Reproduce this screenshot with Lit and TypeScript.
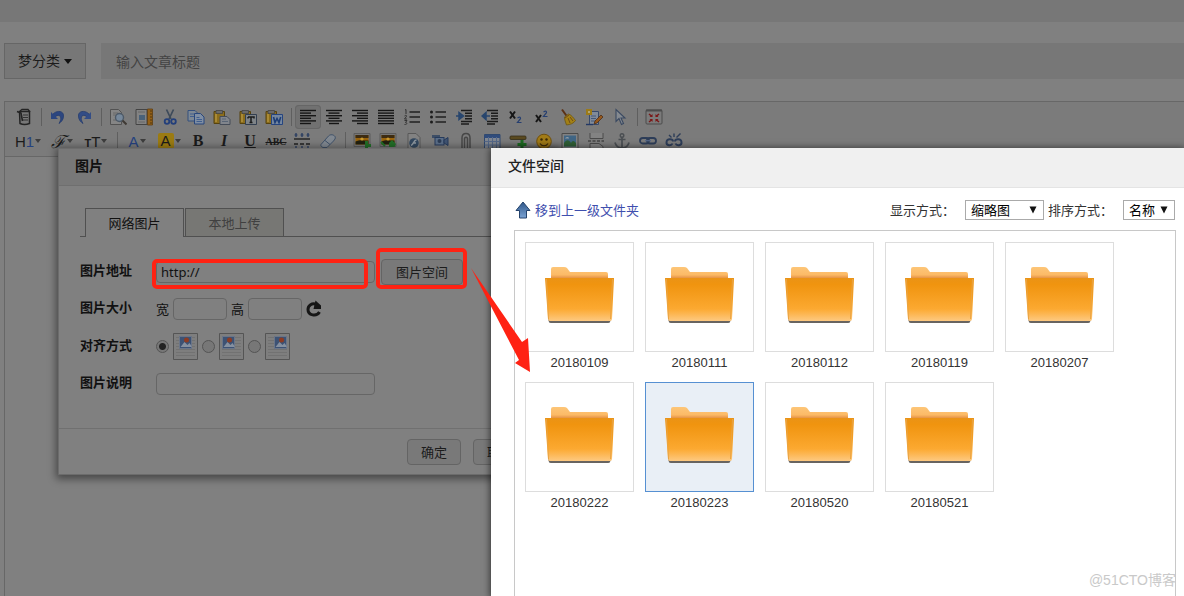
import { LitElement, html, svg, css } from "lit";
import { customElement, property } from "lit/decorators.js";
import { classMap } from "lit/directives/class-map.js";

const lines = (rows: number[][]) =>
  rows.map((r, i) => svg`<path d="M${r[0]} ${2.5 + i * 2.6}H${r[1]}" stroke="#161616" stroke-width="1.4"/>`);

const clipboard = svg`<path d="M1 3.5h10.500v12H1z" fill="#8b6d1c" stroke="#57430f"/><path d="M3 2.500h6.500v3H3z" fill="#6a6a6a" stroke="#444" stroke-width=".8"/><path d="M2 6h2v8H2z" fill="#a98a36"/>`;
const chain = svg`<rect x="1" y="6" width="9" height="5.500" rx="2.750" fill="none" stroke="#2d3d58" stroke-width="1.800"/><rect x="8" y="6" width="9" height="5.500" rx="2.750" fill="none" stroke="#2d3d58" stroke-width="1.800"/><path d="M6 8.700h6" stroke="#56688a" stroke-width="1.200"/>`;
const photo = svg`<path d="M1 1.500h16v13H1z" fill="#777" stroke="#5c5c5c"/><path d="M2.500 3h13v9.500h-13z" fill="#9a640c"/><path d="M2.500 3h13v3h-13z" fill="#3d2c12"/><path d="M2.500 9.500c4-2 8-1 13-1v4h-13z" fill="#22200f"/><circle cx="9" cy="7" r="1.600" fill="#c89a30"/>`;

const ICONS: Record<string, unknown> = {
  source: svg`<path d="M4.500 3.500h10v12c-3 1.200-7 1.200-9.500 0z" fill="#777" stroke="#242424" stroke-width="1.500"/><path d="M5 3l2-1.500h6L15 4" fill="none" stroke="#242424" stroke-width="1.300"/><path d="M2 3.500l4 1.500 1.500 8" fill="none" stroke="#242424" stroke-width="1.600"/><path d="M8 7h5M8 9.500h5M8 12h5" stroke="#333"/>`,
  undo: svg`<path d="M3 7.500C6 2 15 2 14.500 8c0 4-2.500 6-4.500 7.500 1.500-3 2.500-5 1.300-7C10 6.500 7.500 7.500 6 9" fill="#2c4680" stroke="#263c6d" stroke-width=".8"/><path d="M2 4v7h7z" fill="#2c4680"/>`,
  redo: svg`<path d="M15 7.500C12 2 3 2 3.500 8c0 4 2.500 6 4.500 7.500-1.500-3-2.500-5-1.300-7C8 6.500 10.500 7.500 12 9" fill="#334d86" stroke="#263c6d" stroke-width=".8"/><path d="M16 4v7H9z" fill="#334d86"/>`,
  preview: svg`<path d="M1.500 1.500h8l3 3v12h-11z" fill="#858585" stroke="#525252"/><path d="M4 5h5M4 7h3M4 12h4" stroke="#686868"/><circle cx="10.500" cy="9.500" r="4" fill="#76889b" stroke="#4d5966" stroke-width="1.400"/><path d="M13.500 12.500l4 4" stroke="#3f3a35" stroke-width="2"/>`,
  template: svg`<path d="M1 1.500h11v15H1z" fill="#838383" stroke="#444"/><path d="M4 7h6v5H4z" fill="#496179"/><path d="M3 4h7M3 14h7" stroke="#666"/><path d="M12.500 1h5v16h-5z" fill="#946016" stroke="#5e3e12" stroke-width=".8"/><path d="M15 3h2M15 6h2M15 9h2M15 12h2M15 15h2" stroke="#50360e"/>`,
  cut: svg`<path d="M5.500 1.500L10 11M12.500 1.500L8 11" stroke="#3d4a5a" stroke-width="1.700"/><circle cx="6" cy="13.500" r="2.300" fill="none" stroke="#233f7b" stroke-width="1.800"/><circle cx="12.500" cy="13.500" r="2.300" fill="none" stroke="#233f7b" stroke-width="1.800"/>`,
  copy: svg`<path d="M1 2.500h7l2.500 2.500v8H1z" fill="#7d8894" stroke="#35507e"/><path d="M7.500 5.500h6L17 9v7H7.500z" fill="#7f8ea3" stroke="#29477c"/><path d="M3 6h4M3 8.500h4M9.500 9.500h3M9.500 11.500h5.500M9.500 13.500h5.500" stroke="#405e8f"/>`,
  paste: svg`${clipboard}<path d="M7 8.500h7l3 3v5H7z" fill="#81858c" stroke="#454c58"/><path d="M9 11h4M9 13.500h6" stroke="#596575"/>`,
  pastetext: svg`${clipboard}<path d="M6.500 6.500h11v10h-11z" fill="#7f8488" stroke="#333f50"/><path d="M9 9h6v1.500M9 9v1.500M12 9v5.500M10.500 14.500h3" fill="none" stroke="#1b1b1b" stroke-width="1.500"/>`,
  pasteword: svg`${clipboard}<path d="M6.500 6.500h11v10h-11z" fill="#75879f" stroke="#264580"/><path d="M8.500 9l1.500 5.500 2-4 2 4L15.700 9" fill="none" stroke="#1d3d77" stroke-width="1.600"/>`,
  left: svg`${lines([[1, 17], [1, 12], [1, 17], [1, 12], [1, 17], [1, 12]])}`,
  center: svg`${lines([[1, 17], [3.500, 14.500], [1, 17], [3.500, 14.500], [1, 17], [4, 14]])}`,
  right: svg`${lines([[1, 17], [6, 17], [1, 17], [6, 17], [1, 17], [6, 17]])}`,
  full: svg`${lines([[1, 17], [1, 17], [1, 17], [1, 17], [1, 17], [1, 17]])}`,
  ol: svg`<path d="M6.500 4H17M6.500 9H17M6.500 14H17" stroke="#222" stroke-width="1.400"/><path d="M2 2l1-.5V6M1.500 8c2-1.500 2.500 0 1.500 1l-1.500 2h2.500M1.500 12.500H4l-1.500 2c2 0 2 2-1 2" fill="none" stroke="#333"/>`,
  ul: svg`<path d="M6.500 4H17M6.500 9H17M6.500 14H17" stroke="#222" stroke-width="1.400"/><circle cx="2.500" cy="4" r="1.500" fill="#1c1c1c"/><circle cx="2.500" cy="9" r="1.500" fill="#1c1c1c"/><circle cx="2.500" cy="14" r="1.500" fill="#1c1c1c"/>`,
  indent: svg`<path d="M6 2.500h11M10 5.200h7M10 8h7M10 10.800h7M6 13.500h11M6 16h8" stroke="#1c1c1c" stroke-width="1.400"/><path d="M1 8h4M4 4.500L8.500 8 4 11.500z" fill="#28466e" stroke="#28466e" stroke-width="1.500"/>`,
  outdent: svg`<path d="M6 2.500h11M10 5.200h7M10 8h7M10 10.800h7M6 13.500h11M6 16h8" stroke="#1c1c1c" stroke-width="1.400"/><path d="M5 8h4M5 4.500L1 8l4 3.500z" fill="#28466e" stroke="#28466e" stroke-width="1.500"/>`,
  sub: svg`<path d="M3 3.500l5 7M8 3.500l-5 7" stroke="#161616" stroke-width="2"/><path d="M10.500 10c3-2 4 0 2 2l-2 2.500h4" fill="none" stroke="#263f70" stroke-width="1.200"/>`,
  sup: svg`<path d="M3 7l5 7M8 7l-5 7" stroke="#161616" stroke-width="2"/><path d="M10.500 4c3-2 4 0 2 2l-2 2.500h4" fill="none" stroke="#263f70" stroke-width="1.200"/>`,
  broom: svg`<path d="M3 1.500l5 7" stroke="#5b3115" stroke-width="2"/><path d="M5.500 9l4-3c3 1 5 4 7 6.500-2 3-5 4-9 4.500-1-3-2-5-2-8z" fill="#a28016" stroke="#6c5613" stroke-width=".8"/><path d="M6 10l4-3M9 10l2 5M11 9l3 4" stroke="#6f4a18"/>`,
  format: svg`<path d="M4.500 3.500h9v13h-9z" fill="#818b99" stroke="#384a6b"/><path d="M6 8h5M6 10.500h5M6 13h5" stroke="#44597b"/><path d="M1 1h6v6H1z" fill="#9c7b18"/><path d="M3 3h2v2H3z" fill="#b1a574"/><path d="M9 16l1-3 6-6 2 2-6 6z" fill="#94571c" stroke="#4b2f1b" stroke-width=".8"/><path d="M1 16.500h7" stroke="#233865" stroke-width="1.400"/>`,
  select: svg`<path d="M5 1.500v12l3-3 2.500 6 2-1-2.500-5.500h4z" fill="#858a90" stroke="#3a4961" stroke-width="1.100"/>`,
  fullscreen: svg`<rect x="1" y="2" width="16" height="14" rx="1" fill="#7b7b7b" stroke="#4c4c4c"/><path d="M1 2.500h16" stroke="#4c4c4c" stroke-width="2"/><path d="M4 6l3 2.500M14 6l-3 2.500M4 14l3-2.500M14 14l-3-2.500" stroke="#7b1717" stroke-width="1.500"/><path d="M7.500 6v3h-3zM10.500 6v3h3zM7.500 14v-3h-3zM10.500 14v-3h3z" fill="#7b1717"/>`,
  lineheight: svg`<path d="M1 7h16" stroke="#222" stroke-width="1.400"/><path d="M1 12h4M7 12h4M13 12h4" stroke="#222" stroke-width="1.400"/><path d="M3 1v4M9 1v4M15 1v4M3 14v3M9 14v3M15 14v3" stroke="#263a60" stroke-width="1.300"/><path d="M1.500 3h3M7.500 3h3M13.500 3h3" stroke="#263a60"/>`,
  eraser: svg`<path d="M2 12.500L9.500 4c2-2 5-1.500 6.500.500 1 2-.5 3-1.500 4.500L8 15.500H4c-1.500-.5-2.500-1.500-2-3z" fill="#818890" stroke="#3f5169"/><path d="M6 8.500l5 4" stroke="#3f5169"/>`,
  image: svg`${photo}<path d="M12 9h3v3h3v3h-3v3h-3z" fill="#226e27"/>`,
  multiimage: svg`${photo}<path d="M10 11l3-3 4 4-1.500 3H10z" fill="#226e27"/><path d="M2 10l4 4" stroke="#226e27" stroke-width="2"/>`,
  flash: svg`<path d="M3 1.500h8l4 4v12H3z" fill="#828282" stroke="#595959"/><circle cx="9" cy="11" r="4.800" fill="#33485f"/><path d="M11.500 8c-3 0-3 5-5.500 5.500M8 11h3" fill="none" stroke="#8d969e" stroke-width="1.500"/>`,
  media: svg`<path d="M1 3h8v3H1z" fill="#3d4e66"/><rect x="4" y="5.500" width="9" height="7.500" fill="#5b6e88" stroke="#263b5c"/><path d="M13 8l4-2.500v8L13 11z" fill="#405472" stroke="#263b5c"/><circle cx="8.500" cy="9" r="2" fill="#2d3d55"/>`,
  file: svg`<path d="M5 17V6c0-6 8-6 8 0v11M7.500 17V7c0-2.500 3-2.500 3 0v10" fill="none" stroke="#474747" stroke-width="1.500"/>`,
  table: svg`<path d="M1.500 2.500h15.500v14H1.500z" fill="#838992" stroke="#30496f"/><path d="M1.500 3h15.500v3H1.500z" fill="#304c7c"/><path d="M1.500 9.500H17M1.500 13H17M5.500 5v12M9.500 5v12M13.500 5v12" stroke="#55698b"/>`,
  hr: svg`<rect x="1" y="4" width="16" height="3.500" rx="1" fill="#5a4a20" stroke="#352e1b" stroke-width=".8"/><path d="M11.500 8h3v3h3v3h-3v3h-3v-3h-3v-3h3z" fill="#1e6d23"/>`,
  emoji: svg`<circle cx="9" cy="9.500" r="7.300" fill="#a17b17" stroke="#70500e"/><circle cx="6.500" cy="7.500" r="1.200" fill="#3b2a0a"/><circle cx="11.500" cy="7.500" r="1.200" fill="#3b2a0a"/><path d="M5 11.500c2 3 6 3 8 0" fill="none" stroke="#3b2a0a" stroke-width="1.200"/>`,
  map: svg`<path d="M1 1.500h16v15H1z" fill="#818181" stroke="#4b4b4b"/><path d="M3 3.500h12v11H3z" fill="#3f6584"/><path d="M3 11c3-4 5-3 7 0 2-3 3-2 5 0v3.500H3z" fill="#2e5d35"/><path d="M4 6.500c1-2 4-2 4 0z" fill="#8e9aa4"/>`,
  pagebreak: svg`<path d="M3 1v5.500h13V1" fill="#838383" stroke="#4a4a4a"/><path d="M1 9h16" stroke="#444" stroke-dasharray="3 1.500" stroke-width="1.400"/><path d="M3 17v-5.500h9l4 3V17" fill="#838383" stroke="#4a4a4a"/>`,
  anchor: svg`<circle cx="9" cy="3.500" r="1.800" fill="none" stroke="#4a4e52" stroke-width="1.400"/><path d="M9 5v11M5.500 7.500h7M2 10.500c1 4 4 5.500 7 5.500s6-1.500 7-5.500" fill="none" stroke="#4a4e52" stroke-width="1.700"/>`,
  link: chain,
  unlink: svg`<path d="M8 9.500C8 7 2 6 1.500 10s5 4 6 1.500M10 9.500c0-2.500 6-3.500 6.500.5s-5 4-6 1.500" fill="none" stroke="#2d3d58" stroke-width="1.900"/><path d="M9 5V1.500M11.500 5.500l4-4M6.500 5.500L4 3" stroke="#2d3d58" stroke-width="1.400"/>`,
};

const ROW_ONE = "source | undo redo | preview template cut copy paste pastetext pasteword | left center right full ol ul indent outdent sub sup broom format select | fullscreen".split(" ");
const ROW_TWO = "image multiimage flash media file table hr emoji map pagebreak anchor link unlink".split(" ");

@customElement("editor-toolbar")
export class EditorToolbar extends LitElement {
  static styles = css`
    :host { display: block; padding: 3px 6px; background: #7b7b7b; border-bottom: 1px solid #676767; overflow: hidden; }
    .row { display: flex; height: 24px; align-items: center; }
    button { flex: none; width: 26px; height: 24px; padding: 0; border: 0; background: none; display: flex; align-items: center; justify-content: center; color: #1b1b1b; font: 15px "Liberation Sans", Arial, sans-serif; }
    svg { display: block; width: 18px; height: 18px; }
    .active { background: #717171; box-shadow: inset 0 0 0 1px #666; border-radius: 4px; }
    .sep { flex: none; width: 8px; height: 18px; background: linear-gradient(#5f5f5f, #5f5f5f) center / 1px 100% no-repeat; }
    .wide { width: 34px; }
    .mid { width: 32px; }
    .caret { margin-left: 1px; border: 3px solid transparent; border-top: 4px solid #3d3d3d; border-bottom: 0; }
    .blue { color: #25427f; }
    .script { font: italic 18px "DejaVu Serif", serif; }
    .small { font-size: 11px; padding-top: 3px; font-weight: bold; }
    .mark { background: #9b7b12; border-radius: 2px; width: 16px; height: 16px; line-height: 16px; }
    .serif { font: bold 16px "Liberation Serif", serif; }
    .italic { font-style: italic; }
    .under { text-decoration: underline; }
    .strike { font: bold 10px "Liberation Serif", serif; text-decoration: line-through; }
  `;
  private icon(name: string) {
    if (name === "|") return html`<span class="sep"></span>`;
    return html`<button type="button" aria-label=${name} class=${classMap({ active: name === "left" })}>
      <svg viewBox="0 0 18 18" fill="none">${ICONS[name]}</svg>
    </button>`;
  }
  render() {
    const caret = html`<i class="caret"></i>`;
    return html`
      <div class="row">${ROW_ONE.map((n) => this.icon(n))}</div>
      <div class="row">
        <button type="button" class="wide">H<span class="blue">1</span>${caret}</button>
        <button type="button" class="wide"><span class="script">ℱ</span>${caret}</button>
        <button type="button" class="wide"><span class="small">T</span>T${caret}</button>
        <span class="sep"></span>
        <button type="button" class="mid"><span class="blue">A</span>${caret}</button>
        <button type="button" class="mid"><span class="mark">A</span>${caret}</button>
        <button type="button" class="serif">B</button>
        <button type="button" class="serif italic">I</button>
        <button type="button" class="serif under">U</button>
        <button type="button" class="strike">ABC</button>
        ${this.icon("lineheight")}${this.icon("eraser")}${this.icon("|")}
        ${ROW_TWO.map((n) => this.icon(n))}
      </div>
    `;
  }
}

@customElement("image-dialog")
export class ImageDialog extends LitElement {
  static styles = css`
    :host { display: block; background: #808080; border: 1px solid #6c6c6c; box-shadow: 0 2px 8px 2px rgba(0, 0, 0, 0.45); box-sizing: border-box; color: #111; font: 13px/20px "Noto Sans", "Noto Sans CJK SC", sans-serif; }
    header { padding: 7px 16px 9px; background: #787878; border-bottom: 1px solid #6f6f6f; font-size: 14px; font-weight: bold; }
    .content { padding: 22px 0 32px 21px; }
    .tabs { display: flex; gap: 1px; padding-left: 5px; border-bottom: 1px solid #505050; }
    .tab { width: 99px; height: 28px; padding: 0; border: 1px solid #505050; border-bottom: 0; background: #777774; color: #404040; font: inherit; }
    .tab.on { height: 29px; margin-bottom: -1px; background: #808080; color: #111; }
    form { display: flex; flex-direction: column; gap: 12px; padding-top: 22px; }
    .row { display: flex; align-items: center; gap: 4px; min-height: 22px; }
    .name { width: 72px; padding-bottom: 4px; font-weight: bold; }
    input { box-sizing: border-box; margin: 0; height: 22px; border: 1px solid #666; border-radius: 4px; background: #808080; color: #111; padding: 0 4px; font: inherit; }
    .long { width: 219px; }
    .short { width: 54px; }
    input[type="radio"] { appearance: none; width: 13px; height: 13px; padding: 0; border-radius: 50%; border-color: #545454; background: #777; }
    input[type="radio"]:checked { background: radial-gradient(circle, #222 0 3px, #777 4px); }
    .btn { box-sizing: border-box; height: 26px; padding: 0 13px; border: 1px solid #646464; border-radius: 4px; background: #797979; color: #1c1c1c; font: inherit; }
    .space { margin-left: 2px; width: 82px; }
    .reset { padding: 0; border: 0; background: none; height: 18px; }
    svg { display: block; }
    footer { display: flex; justify-content: flex-end; gap: 12px; padding: 10px 30px 9px; border-top: 1px solid #707070; }
  `;
  private align(id: string, x: number, checked = false) {
    return html`<input type="radio" name="align" id=${id} aria-label=${id} .checked=${checked} />
      <label for=${id}><svg width="25" height="27" viewBox="0 0 25 27" fill="none">
        <path d="M.5.500h24v26H.5z" fill="#7e7e7e" stroke="#555"/>
        <path d="M3 4.500h19M3 7.500h19M3 10.500h19M3 13.500h19M3 16.500h19M3 19.500h19M3 22.500h19" stroke="#727272"/>
        <path d="M${x} 3.500h12v12h-12z" fill="#3d5274" stroke="#6a7588"/>
        <path d="M${x + 1} 14l4-5 3 3 2-2 2 3v1z" fill="#8590a0"/>
        <circle cx="${x + 7}" cy="7" r="2.500" fill="#8e3b22"/>
      </svg></label>`;
  }
  render() {
    return html`
      <header>图片</header>
      <div class="content">
        <div class="tabs"><button type="button" class="tab on">网络图片</button><button type="button" class="tab">本地上传</button></div>
        <form>
          <div class="row">
            <label class="name" for="url">图片地址</label>
            <input class="long" id="url" value="http://" />
            <button type="button" class="btn space">图片空间</button>
          </div>
          <div class="row">
            <span class="name">图片大小</span>
            <label for="w">宽</label><input class="short" id="w" />
            <label for="h">高</label><input class="short" id="h" />
            <button type="button" class="reset" aria-label="reset"><svg width="16" height="18" viewBox="0 0 16 18" fill="none"><path d="M10.500 4.500C6 2.500 2 5.500 2 9.500c0 6 8.500 7.500 11.500 2.500" stroke="#161616" stroke-width="3"/><path d="M9.500.500L15 5.500V9H7.500z" fill="#161616"/></svg></button>
          </div>
          <div class="row">
            <span class="name">对齐方式</span>
            ${this.align("default", 6.5, true)}${this.align("left", 3.5)}${this.align("right", 9.5)}
          </div>
          <div class="row">
            <label class="name" for="alt">图片说明</label>
            <input class="long" id="alt" />
          </div>
        </form>
      </div>
      <footer><button type="button" class="btn">确定</button><button type="button" class="btn">取消</button></footer>
    `;
  }
}

@customElement("folder-item")
export class FolderItem extends LitElement {
  @property() name = "";
  @property({ type: Boolean }) selected = false;
  static styles = css`
    :host { display: block; width: 109px; text-align: center; color: #333; font: 13px/21px "Liberation Sans", Arial, sans-serif; }
    .thumb { display: flex; align-items: center; justify-content: center; box-sizing: border-box; width: 100%; height: 110px; padding: 0 0 5px; border: 1px solid #ddd; background: #fff; }
    .selected { border-color: #5690d2; background: #e9eff6; }
  `;
  render() {
    return html`
      <button type="button" aria-label=${this.name} class=${classMap({ thumb: true, selected: this.selected })}>
        <svg width="69" height="56" viewBox="0 0 69 56">
          <defs>
            <linearGradient id="front" x1="0" y1="0" x2="0" y2="1"><stop offset="0" stop-color="#ea9316"/><stop offset=".15" stop-color="#f0940f"/><stop offset=".72" stop-color="#fca931"/><stop offset="1" stop-color="#fdc981"/></linearGradient>
            <linearGradient id="back" x1="0" y1="0" x2="0" y2="1"><stop offset="0" stop-color="#fdc678"/><stop offset=".65" stop-color="#fcba66"/><stop offset="1" stop-color="#df873c"/></linearGradient>
          </defs>
          <path d="M3 52h63l-1 3q0 1-2 1H6q-2 0-2-1z" fill="#686460"/>
          <path d="M6 12V2q0-2 2-2h11q2 0 3 1l3 4h36q2 0 2 2v5z" fill="url(#back)"/>
          <path d="M0 11h69l-2 41q0 2-2 2H5q-2 0-2-2z" fill="url(#front)"/>
          <path d="M1.500 12l2 40M67.500 12l-2 40" stroke="#e9a445" fill="none"/>
        </svg>
      </button>
      <span>${this.name}</span>
    `;
  }
}

@customElement("file-dialog")
export class FileDialog extends LitElement {
  static styles = css`
    :host { display: flex; flex-direction: column; background: #fff; box-shadow: 0 1px 7px 1px rgba(0, 0, 0, 0.6); color: #333; font: 13px/20px "Noto Sans", "Noto Sans CJK SC", sans-serif; }
    header { padding: 8px 17px 11px; background: #f0f0f0; border-bottom: 1px solid #e4e4e4; color: #222; font-size: 14px; font-weight: 500; }
    .bar { display: flex; align-items: center; padding: 12px 9px 10px 24px; }
    .up { display: flex; align-items: center; gap: 4px; color: #3f4fae; text-decoration: none; margin-right: auto; }
    .pick { display: grid; align-items: center; margin-left: 10px; }
    .pick > * { grid-area: 1 / 1; }
    .pick svg { justify-self: end; margin-right: 7px; pointer-events: none; }
    select { appearance: none; box-sizing: border-box; height: 20px; padding: 0 0 0 5px; border: 1px solid #aaa; border-radius: 0; background: #fff; color: #000; font: inherit; line-height: 18px; }
    .view { width: 79px; }
    .order { width: 52px; }
    .second { margin-left: 4px; }
    .list { flex: 1; display: flex; flex-wrap: wrap; align-content: flex-start; gap: 9px 11px; margin: 0 8px 0 23px; padding: 11px 10px; border: 1px solid #c8c8c8; border-bottom: 0; }
  `;
  private names = ["20180109", "20180111", "20180112", "20180119", "20180207", "20180222", "20180223", "20180520", "20180521"];
  private arrow = html`<svg width="8" height="8" viewBox="0 0 8 8"><path d="M.5.500h7L4 7.500z" fill="#111"/></svg>`;
  render() {
    return html`
      <header>文件空间</header>
      <div class="bar">
        <a class="up" href="#"><svg width="16" height="18" viewBox="0 0 16 18"><defs><linearGradient id="g" x1="0" y1="0" x2="0" y2="1"><stop offset="0" stop-color="#2e5688"/><stop offset="1" stop-color="#7ba3d4"/></linearGradient></defs><path d="M8 1l7 8.500h-3.500V17h-7V9.500H1z" fill="url(#g)" stroke="#24436c"/></svg>移到上一级文件夹</a>
        <label for="view">显示方式：</label>
        <div class="pick"><select class="view" id="view"><option>缩略图</option></select>${this.arrow}</div>
        <label class="second" for="order">排序方式：</label>
        <div class="pick"><select class="order" id="order"><option>名称</option></select>${this.arrow}</div>
      </div>
      <div class="list">
        ${this.names.map((n) => html`<folder-item .name=${n} .selected=${n === "20180223"}></folder-item>`)}
      </div>
    `;
  }
}

@customElement("app-root")
export class AppRoot extends LitElement {
  static styles = css`
    :host { display: flex; flex-direction: column; position: relative; height: 100vh; overflow: hidden; background: #808080; font: 14px/20px "Noto Sans", "Noto Sans CJK SC", sans-serif; }
    .band { flex: none; height: 22px; background: #777; }
    .title { display: flex; gap: 15px; padding: 21px 0 22px 4px; }
    .cat { display: flex; align-items: center; gap: 4px; box-sizing: border-box; height: 36px; padding: 0 13px; border: 1px solid #666; background: #777; color: #1c1c1c; font: inherit; }
    .caret { border: 4px solid transparent; border-top: 5px solid #111; border-bottom: 0; }
    .name { flex: 1; min-width: 0; height: 36px; box-sizing: border-box; padding: 0 15px; border: 0; background: #777; font: inherit; }
    .name::placeholder { color: #434343; opacity: 1; }
    .editor { flex: 1; margin-left: 4px; border: 1px solid #676767; border-right: 0; border-bottom: 0; }
    image-dialog { position: absolute; left: 58px; top: 148px; width: 500px; }
    file-dialog { position: absolute; left: 491px; top: 148px; right: 0; bottom: 0; }
    .notes { position: absolute; left: 150px; top: 240px; pointer-events: none; }
    .mark { position: absolute; right: 8px; bottom: 6px; color: #c9c9c9; font-family: "Liberation Sans", "Noto Sans CJK SC", sans-serif; }
  `;
  render() {
    return html`
      <div class="band"></div>
      <div class="title">
        <button type="button" class="cat">梦分类<i class="caret"></i></button>
        <input class="name" aria-label="输入文章标题" placeholder="输入文章标题" />
      </div>
      <div class="editor"><editor-toolbar></editor-toolbar></div>
      <image-dialog></image-dialog>
      <file-dialog></file-dialog>
      <svg class="notes" width="390" height="140" viewBox="0 0 390 140" fill="none">
        <rect x="4" y="21" width="212" height="26" rx="3" stroke="#ff2213" stroke-width="4"/>
        <rect x="228" y="10" width="87" height="37" rx="3" stroke="#ff2213" stroke-width="4"/>
        <path d="M321 28L372 102l6-4 2 34-15-9 4-3z" fill="#ff2213"/>
      </svg>
      <span class="mark">@51CTO博客</span>
    `;
  }
}
